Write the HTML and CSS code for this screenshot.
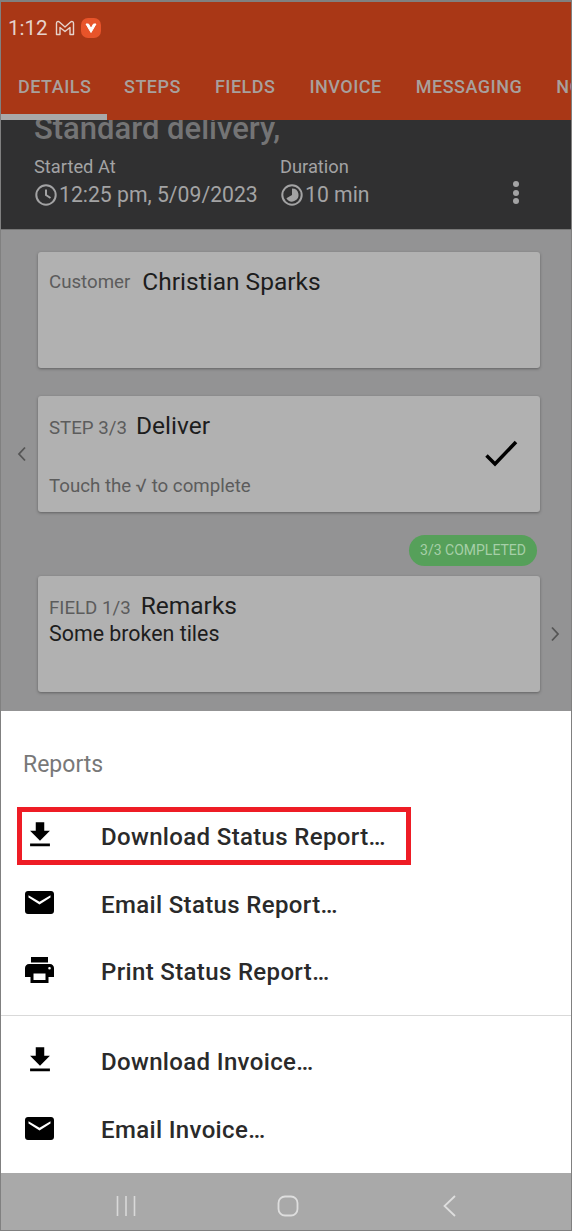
FILE: index.html
```html
<!DOCTYPE html>
<html lang="en">
<head>
    <meta charset="UTF-8">
    <meta name="viewport" content="width=device-width, initial-scale=1.0">
    <title>Job details</title>
    <link rel="stylesheet" href="styles.css">
</head>
<body>
    <div class="phone">
        <!-- status bar and tabs -->
        <div class="top">
            <div class="status">
                <span class="time">1:12</span>
                <svg class="gmail" width="20" height="16" viewBox="0 0 20 16"><path d="M1.500 14.500V3.200C1.500 1.600 3.200 1 4.400 2L10 7l5.600-5c1.200-1 2.900-.4 2.900 1.200v11.300H15V7.500l-5 4-5-4v7z" fill="none" stroke="#e6d3cc" stroke-width="1.400" stroke-linejoin="round"/></svg>
                <span class="vivaldi"><svg width="12" height="10" viewBox="0 0 12 10"><path d="M1 1h2.500L6 5.500 8.500 1H11L6 9.500z" fill="#fff" stroke="#fff" stroke-linejoin="round"/></svg></span>
            </div>
            <div class="tabs">
                <div class="tab on">DETAILS</div>
                <div class="tab">STEPS</div>
                <div class="tab">FIELDS</div>
                <div class="tab">INVOICE</div>
                <div class="tab">MESSAGING</div>
                <div class="tab">NOTES</div>
            </div>
        </div>

        <!-- job summary -->
        <div class="summary">
            <div class="job-title">Standard delivery,</div>
            <div class="meta">
                <div class="meta-col started">
                    <div class="meta-label">Started At</div>
                    <div class="meta-value">
                        <svg width="24" height="24" viewBox="0 0 24 24"><circle cx="12" cy="12" r="9.700" fill="none" stroke="#a3a3a4" stroke-width="2"/><path d="M12 6.500V12l4.500 3" fill="none" stroke="#a3a3a4" stroke-width="2"/></svg>
                        <span>12:25 pm, 5/09/2023</span>
                    </div>
                </div>
                <div class="meta-col">
                    <div class="meta-label">Duration</div>
                    <div class="meta-value">
                        <svg width="24" height="24" viewBox="0 0 24 24"><circle cx="12" cy="12" r="9.700" fill="none" stroke="#a3a3a4" stroke-width="2"/><path d="M12 12V5.500A6.500 6.500 0 1 1 6.400 15.250z" fill="#a3a3a4"/></svg>
                        <span>10 min</span>
                    </div>
                </div>
                <div class="dots"><i></i><i></i><i></i></div>
            </div>
        </div>

        <!-- cards behind the sheet -->
        <div class="content">
            <div class="card customer">
                <div class="card-head"><span class="card-tag">Customer</span><span class="card-name">Christian Sparks</span></div>
            </div>
            <div class="card step">
                <div class="card-head"><span class="card-tag">STEP 3/3</span><span class="card-name">Deliver</span></div>
                <div class="card-hint">Touch the √ to complete</div>
                <svg class="check" width="34" height="28" viewBox="0 0 34 28"><path d="M2.500 15.500l8.500 8.500L32 2" fill="none" stroke="#000" stroke-width="3.500"/></svg>
                <svg class="arrow left" width="10" height="16" viewBox="0 0 10 16"><path d="M8 1.500L2 8l6 6.500" fill="none" stroke="#555" stroke-width="1.800"/></svg>
            </div>
            <div class="pill-row"><span class="pill">3/3 COMPLETED</span></div>
            <div class="card field">
                <div class="card-head"><span class="card-tag">FIELD 1/3</span><span class="card-name">Remarks</span></div>
                <div class="card-text">Some broken tiles</div>
                <svg class="arrow right" width="10" height="16" viewBox="0 0 10 16"><path d="M2 1.500L8 8l-6 6.500" fill="none" stroke="#555" stroke-width="1.800"/></svg>
            </div>
        </div>

        <!-- bottom sheet -->
        <div class="sheet">
            <div class="sheet-title">Reports</div>
            <div class="item marked">
                <span class="ico-box"><svg width="34" height="34" viewBox="0 0 24 24"><path d="M19 9h-4V3H9v6H5l7 7zM5 18v2h14v-2z"/></svg></span>
                <span>Download Status Report…</span>
            </div>
            <div class="item">
                <span class="ico-box"><svg width="29" height="23" viewBox="0 0 29 23"><path d="M3 0h23c1.700 0 3 1.300 3 3v17c0 1.700-1.300 3-3 3H3c-1.700 0-3-1.300-3-3V3C0 1.300 1.300 0 3 0zM14.500 10.800L3.500 4.200v2.400l11 6.800 11-6.800V4.200z" fill-rule="evenodd"/></svg></span>
                <span>Email Status Report…</span>
            </div>
            <div class="item">
                <span class="ico-box"><svg width="29" height="26" viewBox="0 0 29 26"><path d="M6 0h17v5.500H6zM4 7h21c2.200 0 4 1.800 4 4v9h-5.500v6h-18v-6H0v-9c0-2.200 1.800-4 4-4zm4.500 9.500v6.500h12v-6.500zM24.500 10a1.300 1.300 0 1 0 0 2.600 1.300 1.300 0 0 0 0-2.600z" fill-rule="evenodd"/></svg></span>
                <span>Print Status Report…</span>
            </div>
            <div class="divider"></div>
            <div class="item">
                <span class="ico-box"><svg width="34" height="34" viewBox="0 0 24 24"><path d="M19 9h-4V3H9v6H5l7 7zM5 18v2h14v-2z"/></svg></span>
                <span>Download Invoice…</span>
            </div>
            <div class="item">
                <span class="ico-box"><svg width="29" height="23" viewBox="0 0 29 23"><path d="M3 0h23c1.700 0 3 1.300 3 3v17c0 1.700-1.300 3-3 3H3c-1.700 0-3-1.300-3-3V3C0 1.300 1.300 0 3 0zM14.500 10.800L3.500 4.200v2.400l11 6.800 11-6.800V4.200z" fill-rule="evenodd"/></svg></span>
                <span>Email Invoice…</span>
            </div>
        </div>

        <!-- android nav bar -->
        <div class="navbar">
            <svg width="24" height="24" viewBox="0 0 24 24"><path d="M3.500 2v20M12 2v20M20.500 2v20" stroke="#d9d9d9" stroke-width="1.600" fill="none"/></svg>
            <svg width="24" height="24" viewBox="0 0 24 24"><rect x="2.500" y="2.500" width="19" height="19" rx="6.500" fill="none" stroke="#dedede" stroke-width="1.800"/></svg>
            <svg width="24" height="24" viewBox="0 0 24 24"><path d="M17 2L6.500 12 17 22" stroke="#dedede" stroke-width="1.800" fill="none"/></svg>
        </div>
    </div>
</body>
</html>
```

FILE: styles.css
```css
*{
    box-sizing: border-box;
}
body{
    margin: 0;
    background-color: #fff;
    font-family: Roboto, "Liberation Sans", sans-serif;
}
.phone{
    width: 572px;
    height: 1231px;
    border: 1px solid #808080;
    border-top-width: 2px;
    overflow: hidden;
    display: flex;
    flex-direction: column;
}

/* top bar */
.top{
    height: 118px;
    flex: none;
    background-color: #a93716;
    position: relative;
    z-index: 1;
}
.status{
    height: 48px;
    padding: 3px 0 0 7px;
    display: flex;
    align-items: center;
    color: #e6d3cc;
}
.time{
    font-size: 20.500px;
    margin-right: 7px;
}
.gmail{
    margin-right: 6px;
}
.vivaldi{
    width: 20px;
    height: 20px;
    border-radius: 7px;
    background-color: #e8542a;
    display: flex;
    align-items: center;
    justify-content: center;
}
.tabs{
    display: flex;
    height: 70px;
    white-space: nowrap;
}
.tab{
    flex: none;
    padding: 25px 17px 0;
    color: #a8a09d;
    font-size: 18px;
    font-weight: 500;
    letter-spacing: .5px;
    line-height: 24px;
}
.tab.on{
    width: 106px;
    border-bottom: 6px solid #a9a9a9;
}

/* dark summary */
.summary{
    height: 110px;
    flex: none;
    background-color: #303031;
    padding-left: 33px;
    border-bottom: 1px solid #777;
}
.job-title{
    font-size: 31px;
    font-weight: 500;
    line-height: 32px;
    margin-top: -7px;
    color: #747475;
}
.meta{
    display: flex;
    margin-top: 11px;
}
.meta-col{
    color: #a3a3a4;
}
.started{
    width: 246px;
}
.meta-label{
    font-size: 18.300px;
    line-height: 22px;
}
.meta-value{
    display: flex;
    align-items: center;
    font-size: 21.200px;
    line-height: 27px;
    margin-top: 3px;
}
.meta-value svg{
    margin-right: 1px;
}
.dots{
    margin-left: 143px;
    margin-top: 25px;
    display: flex;
    flex-direction: column;
    gap: 2.500px;
}
.dots i{
    display: block;
    width: 6px;
    height: 6px;
    border-radius: 50%;
    background-color: #a3a3a4;
}

/* cards */
.content{
    height: 481px;
    flex: none;
    background-color: #939394;
    padding: 22px 31px 0 37px;
}
.card{
    height: 116px;
    background-color: #b1b1b1;
    border-radius: 3px;
    box-shadow: 0 1px 3px rgba(0,0,0,.35);
    padding: 15px 11px 0;
    margin-bottom: 28px;
    position: relative;
}
.card-head{
    display: flex;
    align-items: baseline;
}
.card-tag{
    font-size: 18.700px;
    color: #5c5c5c;
    margin-right: 10px;
}
.customer .card-tag{
    margin-right: 12px;
    position: relative;
    top: -2px;
}
.step .card-tag{
    margin-right: 9px;
}
.card-name{
    font-size: 24.500px;
    line-height: 30px;
    color: #1d1d1d;
}
.card-hint{
    font-size: 18.700px;
    color: #5c5c5c;
    margin-top: 34px;
}
.card-text{
    font-size: 21.400px;
    color: #1d1d1d;
    line-height: 26px;
}
.check{
    position: absolute;
    right: 22px;
    top: 44px;
}
.arrow{
    position: absolute;
    top: 50px;
}
.arrow.left{
    left: -21px;
}
.arrow.right{
    right: -20px;
}
.field{
    margin-bottom: 0;
}
.pill-row{
    display: flex;
    justify-content: flex-end;
    margin: -5px 3px 10px 0;
}
.pill{
    height: 31px;
    padding: 0 11px;
    border-radius: 16px;
    background-color: #56a05a;
    color: #a6cfa8;
    font-size: 14px;
    line-height: 31px;
}

/* sheet */
.sheet{
    flex: 1;
    background-color: #fff;
    padding-top: 40px;
}
.sheet-title{
    font-size: 23px;
    line-height: 28px;
    color: #787878;
    margin-left: 22px;
    margin-bottom: 24px;
}
.item{
    height: 67.800px;
    display: flex;
    align-items: center;
    font-size: 24px;
    font-weight: 480;
    color: #2a2a2a;
    letter-spacing: .35px;
    position: relative;
}
.ico-box{
    width: 100px;
    padding-right: 23px;
    display: flex;
    justify-content: center;
    margin-bottom: 4px;
}
.marked::after{
    content: "";
    position: absolute;
    left: 16px;
    top: 4px;
    width: 394px;
    height: 58px;
    border: 5px solid #ee1c25;
    box-sizing: border-box;
}
.divider{
    height: 1px;
    background-color: #d9d9d9;
    margin: 9px 0 12px;
}

/* nav */
.navbar{
    height: 57px;
    flex: none;
    background-color: #a9a9a9;
    display: flex;
    align-items: center;
    padding: 9px 0 0 113px;
    gap: 138px;
}
```
